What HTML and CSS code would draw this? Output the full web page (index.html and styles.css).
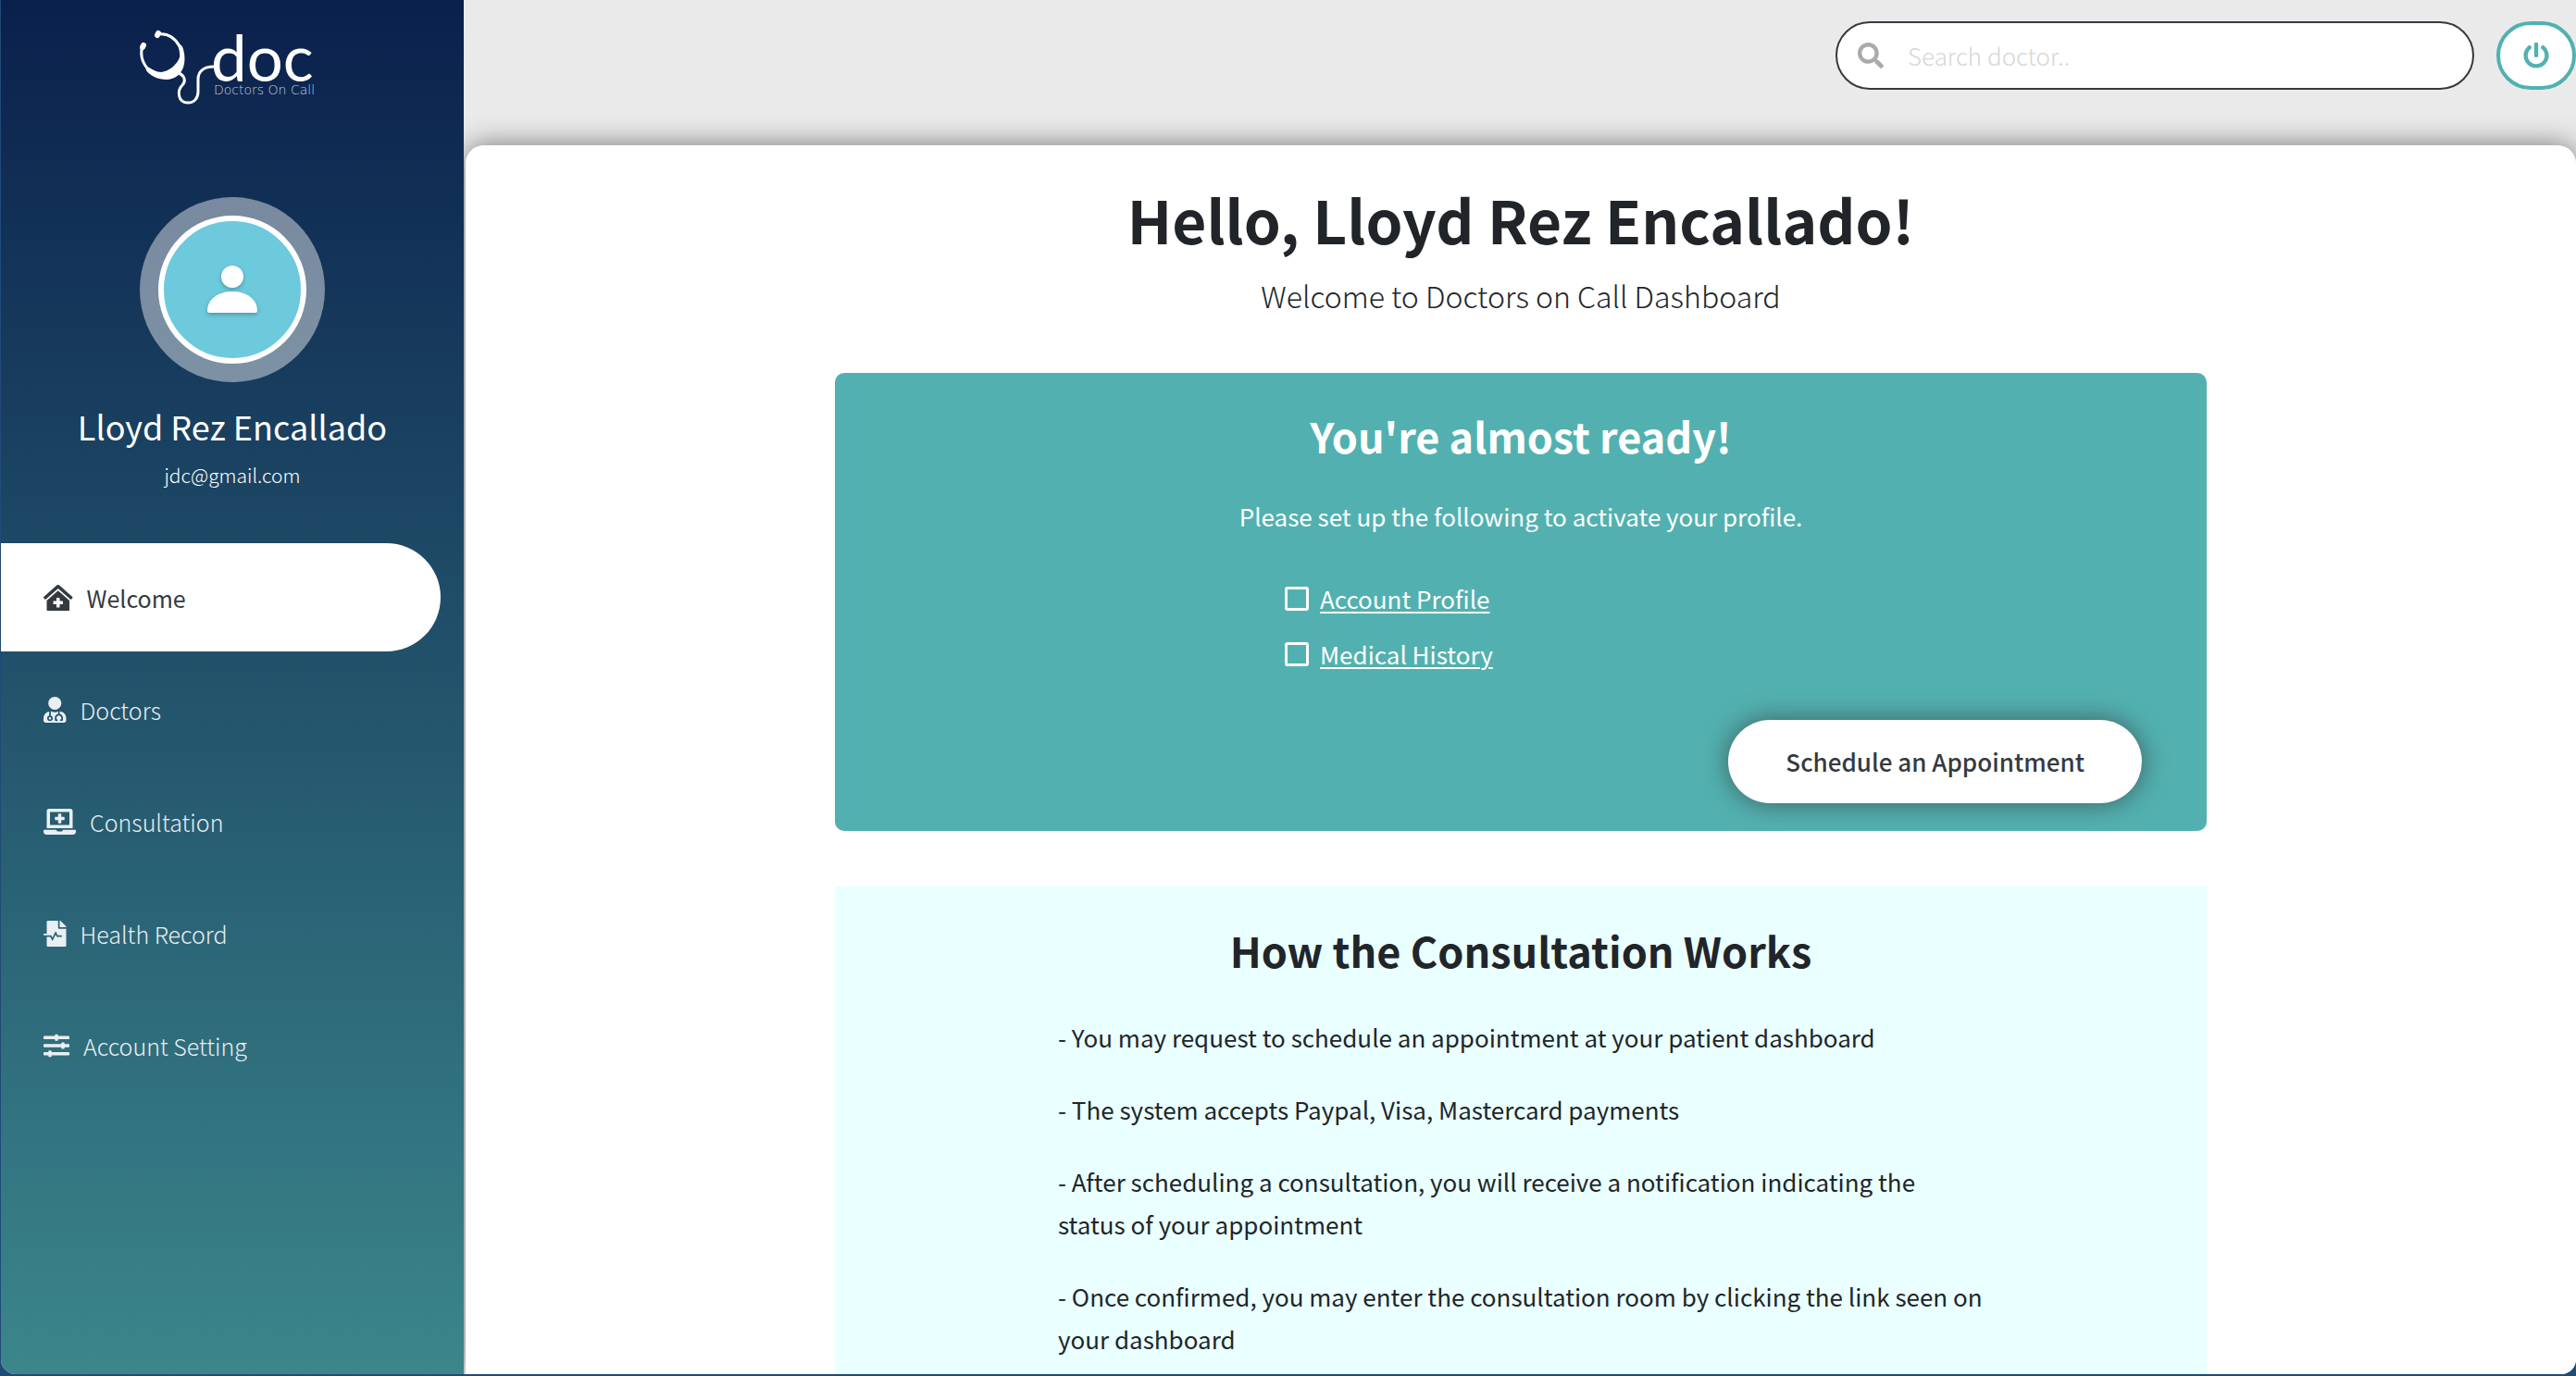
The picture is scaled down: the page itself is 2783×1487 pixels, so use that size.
FILE: index.html
```html
<!DOCTYPE html>
<html lang="en">
<head>
<meta charset="utf-8">
<meta name="viewport" content="width=device-width, initial-scale=1">
<title>Doctors On Call - Dashboard</title>
<link rel="stylesheet" href="styles.css">
</head>
<body>
<div class="shell">
  <aside class="sidebar">
    <a class="logo" href="#" aria-label="Doctors On Call home">
      <svg width="210" height="104" viewBox="0 -20 210 104" aria-hidden="true">
        <g fill="none" stroke="#fff" stroke-linecap="round">
          <path d="M20 5c10-1 18 4 23 13" stroke-width="3"/>
          <path d="M3 18c-3 9 0 18 6 25" stroke-width="3"/>
          <path d="M19 6l1-2M3 19l1-2" stroke-width="6"/>
          <path d="M42 47c7 3 8 9 4 13-6 6-5 19 6 19 7 0 11-5 11-12V54c0-9 6-14 17-14" stroke-width="3"/>
        </g>
        <path d="M41 16c3-1 5 2 6 5 2 7 2 14 0 20-3 8-10 13-18 13-9 0-18-4-22-10-1-2 1-4 3-3 4 2 8 5 13 5 9-1 17-8 20-16 1-5-1-9-2-14z" fill="#fff"/>
        <text class="logo-word" x="77" y="56">doc</text>
        <text class="logo-tag" x="80" y="70">Doctors On Call</text>
      </svg>
    </a>

    <div class="profile">
      <div class="avatar">
        <div class="avatar-face">
          <svg width="60" height="60" viewBox="0 0 60 60" aria-hidden="true">
            <circle cx="30" cy="16" r="12" fill="#fff"/>
            <path d="M3 53c0-13 12-21 27-21s27 8 27 21c0 1-1 2-2 2H5c-1 0-2-1-2-2z" fill="#fff"/>
          </svg>
        </div>
      </div>
      <h2 class="profile-name">Lloyd Rez Encallado</h2>
      <p class="profile-mail">jdc@gmail.com</p>
    </div>

    <nav class="menu">
      <a class="menu-item menu-item-active" href="#">
        <svg class="icon" viewBox="0 0 576 512" aria-hidden="true"><path d="M288 115L69.47 307.71c-1.62 1.46-3.69 2.14-5.47 3.35V496a16 16 0 0 0 16 16h416a16 16 0 0 0 16-16V311.1c-1.7-1.16-3.72-1.82-5.26-3.2zm96 261a8 8 0 0 1-8 8h-56v56a8 8 0 0 1-8 8h-48a8 8 0 0 1-8-8v-56h-56a8 8 0 0 1-8-8v-48a8 8 0 0 1 8-8h56v-56a8 8 0 0 1 8-8h48a8 8 0 0 1 8 8v56h56a8 8 0 0 1 8 8zm186.69-139.72l-255.94-226a39.85 39.85 0 0 0-53.45 0l-256 226a16 16 0 0 0-1.21 22.6L25.5 282.7a16 16 0 0 0 22.6 1.21L277.42 81.63a16 16 0 0 1 21.17 0L527.91 283.9a16 16 0 0 0 22.6-1.21l21.4-23.82a16 16 0 0 0-1.22-22.59z"/></svg>
        <span>Welcome</span>
      </a>
      <a class="menu-item" href="#">
        <svg class="icon" viewBox="0 0 448 512" aria-hidden="true"><path d="M224 256c70.7 0 128-57.3 128-128S294.7 0 224 0 96 57.3 96 128s57.3 128 128 128zM104 424c0 13.3 10.7 24 24 24s24-10.7 24-24-10.7-24-24-24-24 10.7-24 24zm216-135.4v49c36.5 7.4 64 39.8 64 78.4v41.7c0 7.6-5.4 14.2-12.9 15.7l-32.2 6.4c-4.3.9-8.5-1.9-9.4-6.3l-3.1-15.7c-.9-4.3 1.9-8.6 6.3-9.4l19.3-3.9V416c0-62.8-96-65.1-96 1.9v26.7l19.3 3.9c4.3.9 7.1 5.1 6.3 9.4l-3.1 15.7c-.9 4.3-5.1 7.1-9.4 6.3l-31.2-4.2c-7.9-1.1-13.8-7.8-13.8-15.9V416c0-38.6 27.5-70.9 64-78.4v-45.2c-2.2.7-4.4 1.1-6.6 1.9-18 6.3-37.3 9.8-57.4 9.8s-39.4-3.5-57.4-9.8c-7.4-2.6-14.9-4.2-22.6-5.2v81.6c23.1 6.9 40 28.1 40 53.4 0 30.9-25.1 56-56 56s-56-25.1-56-56c0-25.3 16.9-46.5 40-53.4v-80.4C48.5 301 0 355.8 0 422.4v44.8C0 491.9 20.1 512 44.8 512h358.4c24.7 0 44.8-20.1 44.8-44.8v-44.8c0-72-56.8-130.3-128-133.8z"/></svg>
        <span>Doctors</span>
      </a>
      <a class="menu-item" href="#">
        <svg class="icon" viewBox="0 0 640 512" aria-hidden="true"><path d="M232 224h56v56a8 8 0 0 0 8 8h48a8 8 0 0 0 8-8v-56h56a8 8 0 0 0 8-8v-48a8 8 0 0 0-8-8h-56v-56a8 8 0 0 0-8-8h-48a8 8 0 0 0-8 8v56h-56a8 8 0 0 0-8 8v48a8 8 0 0 0 8 8zM576 48a48.14 48.14 0 0 0-48-48H112a48.14 48.14 0 0 0-48 48v336h512zm-64 272H128V64h384zm112 96H381.54c-.74 19.81-14.71 32-32.74 32H288c-18.69 0-33-17.47-32.77-32H16a16 16 0 0 0-16 16v16a64.19 64.19 0 0 0 64 64h512a64.19 64.19 0 0 0 64-64v-16a16 16 0 0 0-16-16z"/></svg>
        <span>Consultation</span>
      </a>
      <a class="menu-item" href="#">
        <svg class="icon" viewBox="0 0 448 512" aria-hidden="true"><path d="M288 136V0H88C74.7 0 64 10.7 64 24v232H8c-4.4 0-8 3.6-8 8v16c0 4.4 3.6 8 8 8h140.9c3 0 5.8 1.7 7.2 4.4l19.9 39.8 56.8-113.7c2.9-5.9 11.4-5.9 14.3 0l34.7 69.5H352c8.8 0 16 7.2 16 16s-7.2 16-16 16h-89.9L240 275.8l-56.8 113.7c-2.9 5.9-11.4 5.9-14.3 0L134.1 320H64v168c0 13.3 10.7 24 24 24h336c13.3 0 24-10.7 24-24V160H312c-13.2 0-24-10.8-24-24zm153-31L343.1 7c-4.5-4.5-10.6-7-17-7H320v128h128v-6.1c0-6.3-2.5-12.4-7-16.9z"/></svg>
        <span>Health Record</span>
      </a>
      <a class="menu-item" href="#">
        <svg class="icon" viewBox="0 0 512 512" aria-hidden="true"><path d="M496 384H160v-16c0-8.8-7.2-16-16-16h-32c-8.8 0-16 7.2-16 16v16H16c-8.8 0-16 7.2-16 16v32c0 8.8 7.2 16 16 16h80v16c0 8.8 7.2 16 16 16h32c8.8 0 16-7.2 16-16v-16h336c8.8 0 16-7.2 16-16v-32c0-8.8-7.2-16-16-16zm0-160h-80v-16c0-8.8-7.2-16-16-16h-32c-8.8 0-16 7.2-16 16v16H16c-8.8 0-16 7.2-16 16v32c0 8.8 7.2 16 16 16h336v16c0 8.8 7.2 16 16 16h32c8.8 0 16-7.2 16-16v-16h80c8.8 0 16-7.2 16-16v-32c0-8.8-7.2-16-16-16zm0-160H288V48c0-8.8-7.2-16-16-16h-32c-8.8 0-16 7.2-16 16v16H16C7.2 64 0 71.2 0 80v32c0 8.8 7.2 16 16 16h208v16c0 8.8 7.2 16 16 16h32c8.8 0 16-7.2 16-16v-16h208c8.8 0 16-7.2 16-16V80c0-8.8-7.2-16-16-16z"/></svg>
        <span>Account Setting</span>
      </a>
    </nav>
  </aside>

  <div class="content">
    <header class="topbar">
      <label class="search">
        <svg class="icon" viewBox="0 0 512 512" aria-hidden="true"><path d="M505 442.7L405.3 343c-4.5-4.5-10.6-7-17-7H372c27.6-35.3 44-79.7 44-128C416 93.1 322.9 0 208 0S0 93.1 0 208s93.1 208 208 208c48.3 0 92.7-16.4 128-44v16.3c0 6.4 2.5 12.5 7 17l99.7 99.7c9.4 9.4 24.6 9.4 33.9 0l28.3-28.3c9.4-9.4 9.4-24.6.1-34zM208 336c-70.7 0-128-57.2-128-128 0-70.7 57.2-128 128-128 70.7 0 128 57.2 128 128 0 70.7-57.2 128-128 128z"/></svg>
        <input class="search-input" type="search" placeholder="Search doctor.." aria-label="Search doctor">
      </label>
      <button class="power" type="button" aria-label="Log out">
        <svg class="icon" viewBox="0 0 512 512" aria-hidden="true"><path d="M400 54.1c63 45 104 118.6 104 201.9 0 136.8-110.8 247.7-247.5 248C120 504.3 8.2 393 8 256.4 7.9 173.1 48.9 99.3 111.8 54.2c11.7-8.3 28-4.8 35 7.7L162.6 90c5.9 10.5 3.1 23.8-6.6 31-41.5 30.8-68 79.6-68 134.9-.1 92.3 74.5 168.1 168 168.1 91.6 0 168.6-74.2 168-169.1-.3-51.8-24.7-101.8-68.1-134-9.7-7.2-12.4-20.5-6.5-30.9l15.8-28.1c7-12.4 23.2-16.1 34.8-7.8zM296 264V24c0-13.3-10.7-24-24-24h-32c-13.3 0-24 10.7-24 24v240c0 13.3 10.7 24 24 24h32c13.3 0 24-10.7 24-24z"/></svg>
      </button>
    </header>

    <main class="main">
      <h1 class="greeting">Hello, Lloyd Rez Encallado!</h1>
      <p class="subtitle">Welcome to Doctors on Call Dashboard</p>

      <section class="card setup">
        <h2 class="card-title">You're almost ready!</h2>
        <p class="setup-text">Please set up the following to activate your profile.</p>
        <ul class="tasks">
          <li class="task">
            <input class="check" type="checkbox" id="task-profile">
            <label for="task-profile"><a class="task-link" href="#">Account Profile</a></label>
          </li>
          <li class="task">
            <input class="check" type="checkbox" id="task-history">
            <label for="task-history"><a class="task-link" href="#">Medical History</a></label>
          </li>
        </ul>
        <button class="schedule" type="button">Schedule an Appointment</button>
      </section>

      <section class="card guide">
        <h2 class="card-title">How the Consultation Works</h2>
        <div class="steps">
          <p>- You may request to schedule an appointment at your patient dashboard</p>
          <p>- The system accepts Paypal, Visa, Mastercard payments</p>
          <p>- After scheduling a consultation, you will receive a notification indicating the status of your appointment</p>
          <p>- Once confirmed, you may enter the consultation room by clicking the link seen on your dashboard</p>
        </div>
      </section>
    </main>
  </div>
</div>
</body>
</html>
```

FILE: styles.css
```css
* {
  box-sizing: border-box;
}

body {
  margin: 0;
  background: #204a78;
  color: #212529;
  font-family: "Noto Sans CJK SC", "Noto Sans", sans-serif;
  font-size: 26px;
  line-height: 46px;
}

h1, h2, p, ul {
  margin: 0;
  padding: 0;
}

a {
  color: inherit;
  text-decoration: none;
}

.shell {
  display: grid;
  grid-template-columns: 500px 1fr;
  height: calc(100vh - 2px);
  margin-left: 1px;
  overflow: hidden;
  border-radius: 0 0 16px 16px;
  background: #eaeaea;
}

.icon {
  height: 28px;
  fill: currentColor;
}

/* Sidebar */

.sidebar {
  background: linear-gradient(#0a204c, #3b868b);
  color: #fff;
}

.logo {
  display: block;
  padding: 12px 0 0 150px;
}

.logo svg {
  display: block;
}

.logo-word {
  fill: #fff;
  font-family: Lato, sans-serif;
  font-size: 69px;
}

.logo-tag {
  fill: #c3cad8;
  font-family: "DejaVu Sans", sans-serif;
  font-size: 14px;
  font-weight: 200;
}

.profile {
  display: flex;
  flex-direction: column;
  align-items: center;
  padding: 97px 0 54px;
}

.avatar {
  padding: 20px;
  border-radius: 50%;
  background: rgba(255, 255, 255, 0.44);
}

.avatar-face {
  display: grid;
  place-items: center;
  width: 160px;
  height: 160px;
  border: 6px solid #fff;
  border-radius: 50%;
  background: #6dc9dc;
}

.avatar-face svg {
  filter: drop-shadow(0 2px 2px rgba(0, 0, 0, 0.25));
}

.profile-name {
  margin-top: 20px;
  font-size: 36px;
  font-weight: 400;
  line-height: 54px;
}

.profile-mail {
  padding-top: 6px;
  font-size: 21px;
  font-weight: 300;
  line-height: 40px;
}

.menu {
  display: grid;
  gap: 4px;
  padding-right: 25px;
}

.menu-item {
  display: flex;
  align-items: center;
  gap: 15px;
  height: 117px;
  padding-left: 46px;
  border-radius: 0 59px 59px 0;
  color: #e9eff2;
  font-size: 25px;
  font-weight: 300;
}

.menu-item-active {
  background: #fff;
  color: #343a40;
  font-weight: 400;
}

/* Top bar */

.content {
  display: flex;
  flex-direction: column;
  min-width: 0;
  min-height: 0;
  overflow: hidden;
}

.topbar {
  display: flex;
  justify-content: flex-end;
  gap: 24px;
  padding: 23px 0 60px;
}

.search {
  display: flex;
  align-items: center;
  gap: 26px;
  width: 690px;
  height: 74px;
  padding: 0 22px;
  border: 2px solid #343a40;
  border-radius: 37px;
  background: #fff;
  color: #aaa;
}

.search-input {
  flex: 1;
  min-width: 0;
  padding: 0;
  border: 0;
  outline: 0;
  background: none;
  color: #343a40;
  font: inherit;
  font-weight: 300;
}

.search-input::placeholder {
  color: #d6d6d6;
}

.power {
  display: grid;
  place-items: center;
  width: 86px;
  height: 74px;
  padding: 0;
  border: 4px solid #52b1b0;
  border-radius: 37px;
  background: #fff;
  color: #52b1b0;
}

/* Main panel */

.main {
  flex: 1;
  display: flex;
  flex-direction: column;
  align-items: center;
  min-height: 0;
  margin-left: 2px;
  padding: 34px 0;
  overflow-y: auto;
  scrollbar-width: none;
  border-radius: 20px 20px 0 0;
  background: #fff;
  box-shadow: 0 0 30px rgba(0, 0, 0, 0.5);
}

.greeting {
  margin-bottom: 8px;
  font-size: 64px;
  font-weight: 700;
  line-height: 90px;
}

.subtitle {
  margin-bottom: 54px;
  font-size: 32px;
  font-weight: 300;
  line-height: 60px;
}

.card {
  flex-shrink: 0;
  display: flex;
  flex-direction: column;
  align-items: center;
  width: 65%;
}

.card-title {
  font-size: 45px;
  font-weight: 700;
  line-height: 60px;
}

.setup {
  padding: 38px 70px 30px;
  border-radius: 10px;
  background: #52b1b0;
  color: #fff;
}

.setup-text {
  margin-top: 34px;
}

.tasks {
  display: grid;
  gap: 14px;
  width: 510px;
  margin-top: 43px;
  list-style: none;
}

.task {
  display: flex;
  align-items: center;
  gap: 12px;
}

.check {
  appearance: none;
  width: 26px;
  height: 26px;
  margin: 0;
  border: 3px solid #fff;
  border-radius: 3px;
}

.task-link {
  text-decoration: underline;
  text-decoration-thickness: 2px;
  text-underline-offset: 3px;
}

.schedule {
  align-self: flex-end;
  height: 90px;
  margin-top: 48px;
  padding: 0 62px;
  border: 0;
  border-radius: 45px;
  background: #fff;
  box-shadow: 0 0 28px rgba(52, 58, 64, 0.7);
  color: #343a40;
  font: inherit;
  font-weight: 500;
}

.guide {
  margin-top: 60px;
  padding: 39px 0 60px;
  background: #eaffff;
}

.steps {
  display: grid;
  gap: 32px;
  width: 1000px;
  margin-top: 41px;
}
```
